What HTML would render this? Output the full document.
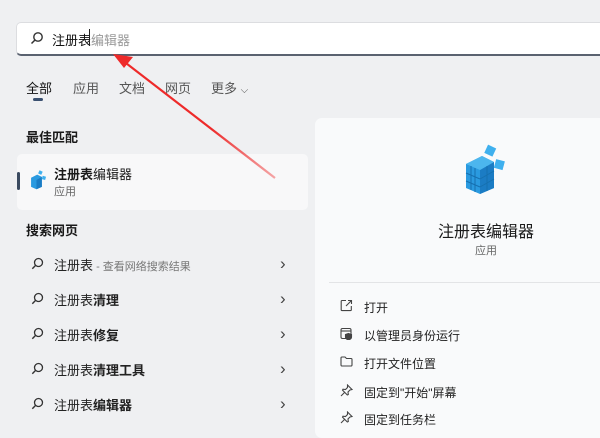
<!DOCTYPE html>
<html><head><meta charset="utf-8"><style>
*{margin:0;padding:0;box-sizing:border-box}
body{width:600px;height:431px;overflow:hidden;background:#eff0f2;font-family:"Liberation Sans","Noto Sans CJK SC",sans-serif;position:relative;color:#1a1a1a}
.a{position:absolute;white-space:nowrap}
.search{left:16px;top:22px;width:600px;height:34px;background:#fff;border:1px solid #dcdde0;border-bottom:2px solid #5a6270;border-radius:5px}
.tab{top:78px;font-size:13px;color:#555}
.h{font-size:13px;font-weight:bold;color:#1a1a1a}
.card{left:17px;top:154px;width:291px;height:56px;background:#f8f8f9;border-radius:5px}
.right{left:315px;top:118px;width:300px;height:320px;background:#f9fafb;border-radius:7px}
.row{left:54px;font-size:13px;color:#222}
.chev{left:280px;font-size:17px;color:#444;line-height:17px}
.mi{left:364px;font-size:12px;color:#222}
</style></head><body>
<div class="a search"></div>
<svg class="a" style="left:30px;top:31px" width="14" height="14" viewBox="0 0 14 14"><circle cx="8" cy="6" r="4.2" fill="none" stroke="#333" stroke-width="1.4"/><line x1="5" y1="9" x2="1.5" y2="12.5" stroke="#333" stroke-width="1.5"/></svg>
<div class="a" style="left:52px;top:30px;font-size:13px;"><b style="font-weight:normal;color:#111">注册表</b><span style="color:#999">编辑器</span></div>
<div class="a" style="left:89px;top:29px;width:1px;height:17px;background:#222"></div>

<div class="a tab" style="left:26px;color:#111">全部</div>
<div class="a" style="left:33px;top:98px;width:10px;height:3px;background:#3a5070;border-radius:2px"></div>
<div class="a tab" style="left:73px">应用</div>
<div class="a tab" style="left:119px">文档</div>
<div class="a tab" style="left:165px">网页</div>
<div class="a tab" style="left:211px">更多 <span style="font-size:10px">⌵</span></div>

<div class="a h" style="left:26px;top:127px">最佳匹配</div>
<div class="a card"></div>
<div class="a" style="left:17px;top:172px;width:3px;height:18px;background:#3a4a60;border-radius:2px"></div>
<svg class="a" style="left:29px;top:170px" width="18" height="20" viewBox="0 0 44 52">
<polygon points="4,20 20,12 32,18 32,44 18,50 4,44" fill="#2a9ae0"/><polygon points="18,26 32,18 32,44 18,50" fill="#1b7cc4"/>
<rect x="24" y="2" width="9" height="9" fill="#3fb0ee" transform="rotate(25 28 6)"/><rect x="33" y="16" width="9" height="9" fill="#3fb0ee" transform="rotate(15 37 20)"/></svg>
<div class="a" style="left:54px;top:164px;font-size:13px"><b>注册表</b>编辑器</div>
<div class="a" style="left:54px;top:183px;font-size:11px;color:#666">应用</div>

<div class="a h" style="left:26px;top:220px">搜索网页</div>
<div id="rows"></div>

<div class="a right"></div>
<svg class="a" style="left:462px;top:144px" width="44" height="52" viewBox="0 0 44 52">
<polygon points="4,20 20,12 32,18 32,44 18,50 4,44" fill="#2a9ae0"/>
<polygon points="18,26 32,18 32,44 18,50" fill="#1b7cc4"/>
<polygon points="4,20 20,12 32,18 18,26" fill="#4cb6ee"/>
<g stroke="#1670b0" stroke-width="1"><line x1="4" y1="29" x2="18" y2="35"/><line x1="4" y1="37" x2="18" y2="43"/><line x1="9" y1="22" x2="9" y2="46"/><line x1="13" y1="24" x2="13" y2="48"/><line x1="18" y1="35" x2="32" y2="27"/><line x1="18" y1="43" x2="32" y2="35"/><line x1="25" y1="22" x2="25" y2="47"/></g>
<rect x="24" y="2" width="9" height="9" fill="#3fb0ee" transform="rotate(25 28 6)"/>
<rect x="33" y="16" width="9" height="9" fill="#3fb0ee" transform="rotate(15 37 20)"/>
</svg>
<div class="a" style="left:438px;top:218px;font-size:16px;color:#1a1a1a">注册表编辑器</div>
<div class="a" style="left:475px;top:242px;font-size:11px;color:#666">应用</div>
<div class="a" style="left:329px;top:282px;width:280px;height:1px;background:#e3e4e6"></div>

<svg class="a" style="left:340px;top:299px" width="13" height="13" viewBox="0 0 13 13" fill="none" stroke="#444" stroke-width="1.1"><path d="M6 1.5H2a.8.8 0 0 0-.8.8v8.5a.8.8 0 0 0 .8.8h8.5a.8.8 0 0 0 .8-.8V7"/><path d="M8 1.5h3.5V5M11.5 1.5 6 7"/></svg>
<div class="a mi" style="top:299px">打开</div>
<svg class="a" style="left:340px;top:327px" width="13" height="13" viewBox="0 0 13 13" fill="none" stroke="#444" stroke-width="1.1"><rect x="1" y="1.5" width="10" height="10" rx="1.5"/><path d="M1 4h10"/><path d="M8.5 6.5l3 1v2.5c0 1.5-1.5 2.5-3 3-1.5-.5-3-1.5-3-3V7.5z" fill="#444"/></svg>
<div class="a mi" style="top:327px">以管理员身份运行</div>
<svg class="a" style="left:340px;top:355px" width="13" height="13" viewBox="0 0 13 13" fill="none" stroke="#444" stroke-width="1.1"><path d="M1 3a1 1 0 0 1 1-1h3l1.5 1.5H11a1 1 0 0 1 1 1V10a1 1 0 0 1-1 1H2a1 1 0 0 1-1-1z"/></svg>
<div class="a mi" style="top:355px">打开文件位置</div>
<svg class="a" style="left:340px;top:384px" width="13" height="13" viewBox="0 0 13 13" fill="none" stroke="#444" stroke-width="1.1"><path d="M7.5 1l4.5 4.5-2 .5-2 2 .3 2.5-1 .5L2.5 6.2l.5-1 2.5.3 2-2z"/><path d="M4.5 8.5 1 12"/></svg>
<div class="a mi" style="top:384px">固定到"开始"屏幕</div>
<svg class="a" style="left:340px;top:411px" width="13" height="13" viewBox="0 0 13 13" fill="none" stroke="#444" stroke-width="1.1"><path d="M7.5 1l4.5 4.5-2 .5-2 2 .3 2.5-1 .5L2.5 6.2l.5-1 2.5.3 2-2z"/><path d="M4.5 8.5 1 12"/></svg>
<div class="a mi" style="top:411px">固定到任务栏</div>

<script>
var r=[['','<span style="color:#777;font-size:11px"> - 查看网络搜索结果</span>'],['清理',''],['修复',''],['清理工具',''],['编辑器','']];
var h='';r.forEach(function(x,i){var y=255+i*35;
h+='<svg class="a" style="left:31px;top:'+(y+2)+'px" width="13" height="13" viewBox="0 0 13 13"><circle cx="7.5" cy="5.5" r="4" fill="none" stroke="#333" stroke-width="1.3"/><line x1="4.6" y1="8.4" x2="1.3" y2="11.7" stroke="#333" stroke-width="1.4"/></svg>';
h+='<div class="a row" style="top:'+y+'px">注册表<b>'+x[0]+'</b>'+x[1]+'</div><div class="a chev" style="top:'+y+'px">›</div>';});
document.getElementById('rows').innerHTML=h;
</script>

<svg class="a" style="left:0;top:0" width="600" height="431"><defs><linearGradient id="g" x1="275" y1="178" x2="115" y2="55" gradientUnits="userSpaceOnUse"><stop offset="0" stop-color="#f05050" stop-opacity="0.5"/><stop offset="0.4" stop-color="#ee2a2a"/><stop offset="1" stop-color="#ee2a2a"/></linearGradient></defs>
<line x1="275" y1="178" x2="122" y2="60" stroke="url(#g)" stroke-width="2.2"/>
<polygon points="113,54 133,57 124,68" fill="#ee2a2a"/></svg>
</body></html>
